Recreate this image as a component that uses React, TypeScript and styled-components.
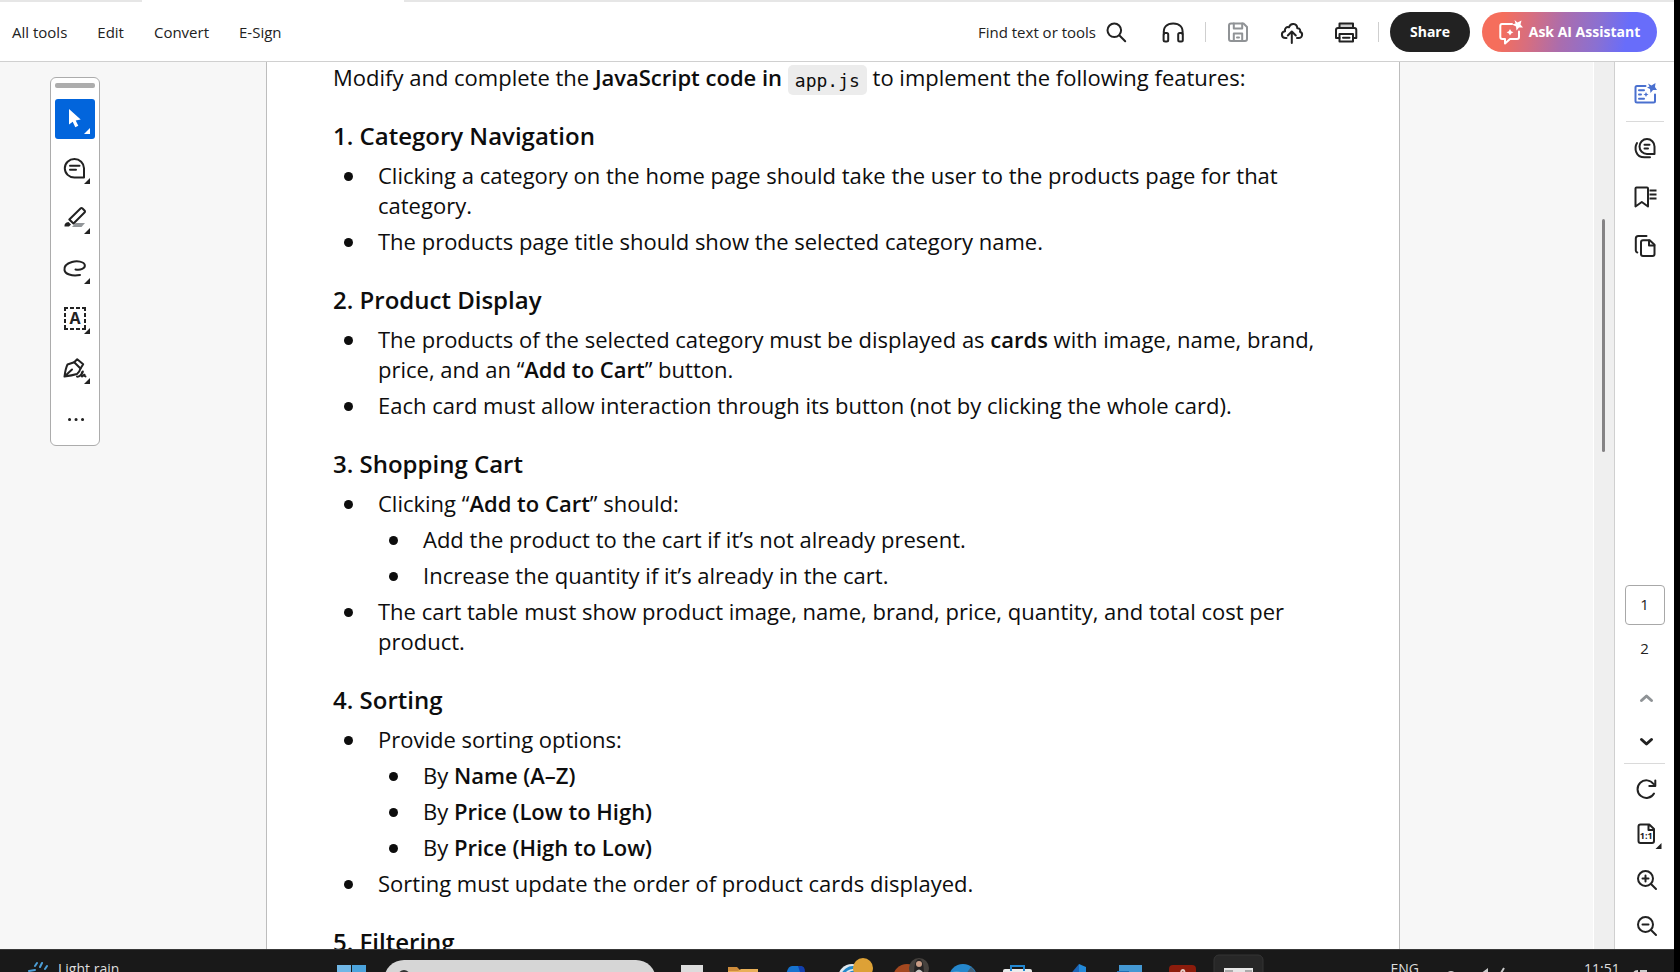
import React from 'react';
import styled, { createGlobalStyle } from 'styled-components';

const INK = '#222222';
const LINE = '#d0d0d0';
const UI_FONT = "'Open Sans', 'Noto Sans', sans-serif";

const GlobalStyle = createGlobalStyle`
  *, *::before, *::after { box-sizing: border-box; }
  body { margin: 0; background: #000; font-family: ${UI_FONT}; color: ${INK}; }
  button, input { font: inherit; color: inherit; margin: 0; }
  svg { display: block; flex: none; overflow: visible; }
`;

/* ---------- window ---------- */

const Window = styled.div`
  display: flex;
  flex-direction: column;
  height: 100vh;
  overflow: hidden;
  border-right: 6px solid #000;
  background: #fff;
`;

const TabStrip = styled.div`
  display: grid;
  grid-template-columns: 142px 262px 1fr;
  flex: none;
  height: 2px;
`;

const TabEdge = styled.span<{ $active?: boolean }>`
  background: ${(p) => (p.$active ? '#fff' : '#e6e6e6')};
`;

/* ---------- top bar ---------- */

const TopBar = styled.header`
  display: flex;
  flex: none;
  align-items: center;
  justify-content: space-between;
  height: 60px;
  padding: 0 17px 0 12px;
  border-bottom: 1px solid ${LINE};
  font-size: 15px;
  line-height: 20px;
`;

const Menu = styled.nav`
  display: flex;
  gap: 30px;
`;

const PlainButton = styled.button`
  display: flex;
  align-items: center;
  padding: 0;
  border: 0;
  background: none;
  white-space: nowrap;
  cursor: pointer;
`;

const Actions = styled.div`
  display: flex;
  align-items: center;
`;

const FindButton = styled(PlainButton)`
  gap: 8px;
  margin-right: 33px;
`;

const ActionGroup = styled.div`
  display: flex;
  gap: 30px;
`;

const Divider = styled.span`
  width: 1px;
  height: 20px;
  margin: 0 20px;
  background: #cfcfcf;
`;

const Pills = styled.div`
  display: flex;
  gap: 12px;
  margin-left: -9px;
`;

const Pill = styled.button<{ $ai?: boolean }>`
  display: flex;
  align-items: center;
  justify-content: center;
  gap: 6px;
  height: 40px;
  min-width: ${(p) => (p.$ai ? 175 : 80)}px;
  padding: 0;
  border: 0;
  border-radius: 20px;
  background: ${(p) =>
    p.$ai
      ? 'linear-gradient(100deg, #f56e5c 12%, #d66e80 28%, #aa6dae 46%, #8a70d2 66%, #686dfa 82%)'
      : INK};
  color: #fff;
  font-size: 14px;
  font-weight: 700;
  white-space: nowrap;
  cursor: pointer;
`;

/* ---------- workspace ---------- */

const Workspace = styled.main`
  display: flex;
  flex: 1;
  min-height: 0;
`;

const Viewer = styled.div`
  display: grid;
  grid-template-columns: 266px minmax(0, 1fr) 193px;
  flex: 1;
  min-width: 0;
  overflow: hidden;
  background: #f7f7f7;
`;

const Gutter = styled.div`
  min-width: 0;
`;

const Palette = styled.div`
  display: flex;
  flex-direction: column;
  align-items: center;
  gap: 10px;
  width: 50px;
  margin: 15px 0 0 50px;
  padding: 5px 0 6px;
  border: 1px solid #acacac;
  border-radius: 6px;
  background: #fff;
`;

const Grip = styled.span`
  width: 40px;
  height: 5px;
  margin-bottom: 1px;
  border-radius: 2px;
  background: #adadad;
`;

const ToolButton = styled.button<{ $selected?: boolean }>`
  width: 40px;
  height: 40px;
  padding: 0;
  border: 0;
  border-radius: 3px;
  background: ${(p) => (p.$selected ? '#0265dc' : 'none')};
  color: ${(p) => (p.$selected ? '#fff' : INK)};
  cursor: pointer;
`;

/* ---------- document ---------- */

const Page = styled.article`
  overflow: hidden;
  padding: 0 70px 0 66px;
  border: solid #bdbdbd;
  border-width: 0 1px;
  background: #fff;
  color: #0d0d0d;
  font-size: 22px;
  line-height: 30px;

  p { margin: 0; }
  strong { font-weight: 600; }
`;

const Code = styled.code`
  padding: 5px 7px 4px;
  border-radius: 5px;
  background: #ececec;
  font: 18px/18px 'DejaVu Sans Mono', monospace;
  vertical-align: -1px;
`;

const Heading = styled.h2`
  margin: 27px 0 7px;
  font-size: 24px;
  font-weight: 600;
  line-height: 34px;
`;

const List = styled.ul`
  display: flex;
  flex-direction: column;
  gap: 6px;
  margin: 0;
  padding: 0;
  list-style: none;

  & & { margin-top: 6px; }
`;

const ItemRow = styled.li`
  display: grid;
  grid-template-columns: 9px minmax(0, 1fr);
  gap: 25px;
  padding-left: 11px;

  &::before {
    content: '';
    width: 9px;
    height: 9px;
    margin-top: 12px;
    border-radius: 50%;
    background: #0d0d0d;
  }
`;

const Item = ({ children }: { children: React.ReactNode }) => (
  <ItemRow>
    <div>{children}</div>
  </ItemRow>
);

/* ---------- scrollbar and right rail ---------- */

const ScrollTrack = styled.div`
  flex: none;
  width: 22px;
  padding: 157px 0 0 9px;
  border: solid ${LINE};
  border-width: 0 1px 0 0;
  background: #efefef;
  box-shadow: inset 1px 0 #fff;
`;

const ScrollThumb = styled.div`
  width: 3px;
  height: 233px;
  border-radius: 2px;
  background: #858385;
`;

const Rail = styled.aside`
  display: flex;
  flex: none;
  flex-direction: column;
  justify-content: space-between;
  width: 59px;
  padding: 20px 0 11px;
`;

const RailGroup = styled.div<{ $gap: number }>`
  display: flex;
  flex-direction: column;
  align-items: center;
  gap: ${(p) => p.$gap}px;
`;

const RailRule = styled.hr<{ $wide?: boolean }>`
  width: ${(p) => (p.$wide ? 41 : 38)}px;
  height: 1px;
  margin: ${(p) => (p.$wide ? '9px auto 12px' : '15px auto 14px')};
  border: 0;
  background: #dadada;
`;

const PageInput = styled.input`
  width: 40px;
  height: 40px;
  padding: 0 0 3px;
  border: 1px solid #a8a8a8;
  border-radius: 4px;
  background: #fff;
  font-size: 15px;
  text-align: center;
`;

const PageCount = styled.span`
  margin: 11px 0 26px;
  font-size: 15px;
  line-height: 24px;
`;

/* ---------- taskbar ---------- */

const Taskbar = styled.footer`
  display: flex;
  flex: none;
  justify-content: space-between;
  height: 23px;
  overflow: hidden;
  border-top: 1px solid #383838;
  background: #191919;
  color: #dedede;
  font-size: 14px;
  line-height: 20px;
`;

const Weather = styled.button`
  display: flex;
  align-items: flex-start;
  gap: 10px;
  width: 337px;
  padding: 9px 0 0 28px;
  border: 0;
  background: none;
  text-align: left;
`;

const Apps = styled.div`
  display: flex;
  flex: 1;
`;

const AppButton = styled.button<{ $width?: number }>`
  flex: none;
  width: ${(p) => p.$width ?? 55}px;
  height: 23px;
  padding: 0;
  border: 0;
  background: none;
`;

const SearchBox = styled.div`
  width: 272px;
  height: 40px;
  margin: 10px 7px 0 14px;
  padding: 10px 14px;
  border-radius: 20px;
  background: #d6d6d6;
  color: #333;
`;

const Tray = styled.div`
  display: flex;
  align-items: flex-start;
  padding: 9px 26px 0 0;
`;

const TrayStatus = styled.div`
  width: 110px;
  margin: 0 27px 0 28px;
`;

const Clock = styled.time`
  width: 56px;
`;

/* ---------- icons ---------- */

type IconProps = { children: React.ReactNode; color?: string; weight?: number; size?: number };

const Icon = ({ children, color = 'currentColor', weight = 2, size = 24 }: IconProps) => (
  <svg
    width={size}
    height={size}
    viewBox={`0 0 ${size} ${size}`}
    fill="none"
    stroke={color}
    strokeWidth={weight}
    strokeLinecap="round"
    strokeLinejoin="round"
    aria-hidden="true"
  >
    {children}
  </svg>
);

const Corner = () => <path d="M35 29v6h-6z" fill="currentColor" stroke="none" />;

const tools = [
  {
    name: 'Select',
    art: <path d="M14 10v15.4l3.7-2.6 2.6 5.4 3-1.4-2.6-5.4 5-.9z" fill="currentColor" stroke="none" />,
  },
  {
    name: 'Add comment',
    art: <path d="M29 28.600h-9.600a9.600 9.300 0 1 1 9.600-9.300zM15 16.800h9.500M15 20.700h6" />,
  },
  {
    name: 'Highlight',
    art: (
      <>
        <path d="M17 28l3.500-4H30l-3.500 4z" fill="#929699" stroke="none" />
        <path d="M14.300 20.500 25.500 9.500q1-1 2 0l2 2q1 1 0 2L18.500 24.500z" />
        <path d="M9.500 27.500q-.5-4 4-4.500l2.500 2.500-2 2z" fill="currentColor" stroke="none" />
      </>
    ),
  },
  {
    name: 'Draw',
    art: <path d="M20.500 20.500c5 1 10-1 9.300-4.500C29 12.500 22 11.500 17 13c-5 1.500-8 4.500-7.500 8 .6 4 7 6.500 15.500 5" />,
  },
  {
    name: 'Add text',
    art: (
      <>
        <path
          d="M9 9h22M9 30h22M10 8v23M30 8v23"
          strokeDasharray="4 2"
          strokeLinecap="butt"
        />
        <text x="20" y="25" fontSize="16" fontWeight="700" textAnchor="middle" fill="currentColor" stroke="none">A</text>
      </>
    ),
  },
  {
    name: 'Sign',
    art: (
      <>
        <path d="M9.500 27.500q1-8 3-12l6.700-2.300 6.300 6.300q-1 3.500-3.500 5.500-5 1.500-12.500 2.500zl7.500-7" />
        <path d="m19.200 13.200 3-3 6 5-2.700 4.300M22 27.600c3 .8 6.500-4.800 5.800-5.200-1.500.5-1.800 4.800-.6 5 1 0 1.500-2 2.300-1.700.2.600-.2 1.700 1 1.700" />
      </>
    ),
  },
];

const DocumentBody = () => (
  <Page>
    <p>
      Modify and complete the <strong>JavaScript code in</strong> <Code>app.js</Code> to implement the following features:
    </p>

    <Heading>1. Category Navigation</Heading>
    <List>
      <Item>Clicking a category on the home page should take the user to the products page for that category.</Item>
      <Item>The products page title should show the selected category name.</Item>
    </List>

    <Heading>2. Product Display</Heading>
    <List>
      <Item>
        The products of the selected category must be displayed as <strong>cards</strong> with image, name, brand,
        price, and an “<strong>Add to Cart</strong>” button.
      </Item>
      <Item>Each card must allow interaction through its button (not by clicking the whole card).</Item>
    </List>

    <Heading>3. Shopping Cart</Heading>
    <List>
      <Item>
        Clicking “<strong>Add to Cart</strong>” should:
        <List>
          <Item>Add the product to the cart if it’s not already present.</Item>
          <Item>Increase the quantity if it’s already in the cart.</Item>
        </List>
      </Item>
      <Item>The cart table must show product image, name, brand, price, quantity, and total cost per product.</Item>
    </List>

    <Heading>4. Sorting</Heading>
    <List>
      <Item>
        Provide sorting options:
        <List>
          <Item>By <strong>Name (A–Z)</strong></Item>
          <Item>By <strong>Price (Low to High)</strong></Item>
          <Item>By <strong>Price (High to Low)</strong></Item>
        </List>
      </Item>
      <Item>Sorting must update the order of product cards displayed.</Item>
    </List>

    <Heading>5. Filtering</Heading>
  </Page>
);

const apps: { name: string; art: React.ReactNode }[] = [
  { name: 'Task view', art: <path d="M18 15h22v12H18z" fill="#dcdcdc" /> },
  {
    name: 'File Explorer',
    art: (
      <>
        <path d="M10 27V17h9l3 3h15v7z" fill="#cf8c3b" />
        <path d="M10 27v-6h10l3-2h17v8z" fill="#eab058" />
      </>
    ),
  },
  {
    name: 'Copilot',
    art: (
      <>
        <path d="M13 27q1-11 6-11h8q4 0 4 6v5z" fill="#1673cf" />
        <path d="M25 16h3q4 0 4 6h-5z" fill="#123fae" />
      </>
    ),
  },
  {
    name: 'Browser',
    art: (
      <>
        <circle cx="24" cy="28" r="14" fill="#dfe9f0" />
        <path d="M14 28a11 11 0 0 1 14-10M19 28a7 7 0 0 1 8-6" fill="none" stroke="#2388c9" strokeWidth="3" />
        <circle cx="35" cy="18" r="10" fill="#dda136" />
      </>
    ),
  },
  {
    name: 'PowerPoint',
    art: (
      <>
        <circle cx="24" cy="28" r="14" fill="#a4481f" />
        <circle cx="36" cy="18" r="10" fill="#46423e" />
        <path d="M31 24q0-15 5-15t5 15z" fill="#252323" />
        <circle cx="36" cy="14" r="3" fill="#c99d86" />
        <path d="M31 24q5-9 10 0z" fill="#c9c5c2" />
      </>
    ),
  },
  {
    name: 'Edge',
    art: (
      <>
        <circle cx="25" cy="28" r="14" fill="#2587cc" />
        <path d="M25 28l8-11q5 4 6 11z" fill="#416078" />
        <path d="M12 24q6-6 14 0v4H12z" fill="#459bd0" />
      </>
    ),
  },
  {
    name: 'Store',
    art: (
      <>
        <path d="M10 27v-6q0-2 2-2h25q2 0 2 2v6z" fill="#ececec" />
        <path d="M18 21v-5h13v5" fill="none" stroke="#2387d0" strokeWidth="2" />
      </>
    ),
  },
  {
    name: 'Visual Studio Code',
    art: (
      <>
        <path d="M20 27 31 14v13z" fill="#1c64b5" />
        <path d="m31 14 7 3v10h-7z" fill="#2389d8" />
        <path d="m10 22 6 5h-4z" fill="#173f77" />
      </>
    ),
  },
  {
    name: 'Remote Desktop',
    art: (
      <>
        <path d="M16 15h23v12H16z" fill="#4498d3" />
        <path d="M14 21h12v6H14z" fill="#1e6fb3" />
      </>
    ),
  },
  {
    name: 'Acrobat',
    art: (
      <>
        <rect x="11" y="15" width="27" height="20" rx="4" fill="#8c1c0c" />
        <path d="M23 24q0-4 2-4t1 4" fill="none" stroke="#e5cfc8" strokeWidth="2" />
      </>
    ),
  },
  {
    name: 'Screen recorder',
    art: (
      <>
        <rect x="1" y="5" width="49" height="30" rx="5" fill="#272727" stroke="#353535" />
        <path d="M11 18h29v9H11z" fill="#e6e6e6" />
        <path d="M12 21h8M32 21h7" stroke="#aaa" strokeWidth="2" />
      </>
    ),
  },
];

export default function App() {
  return (
    <Window>
      <GlobalStyle />
      <TabStrip>
        <TabEdge />
        <TabEdge $active />
        <TabEdge />
      </TabStrip>

      <TopBar>
        <Menu aria-label="Main">
          <PlainButton>All tools</PlainButton>
          <PlainButton>Edit</PlainButton>
          <PlainButton>Convert</PlainButton>
          <PlainButton>E-Sign</PlainButton>
        </Menu>
        <Actions>
          <FindButton>
            Find text or tools
            <Icon>
              <circle cx="10.300" cy="10.300" r="6.800" />
              <path d="m15.500 15.500 5.700 5.700" />
            </Icon>
          </FindButton>
          <PlainButton aria-label="Read aloud">
            <Icon>
              <path d="M3 14C1.800 7 6 3.500 12.200 3.500S22.600 7 21.400 14" />
              <rect x="2.600" y="13" width="4.600" height="8.500" rx="1.500" />
              <rect x="17.200" y="13" width="4.600" height="8.500" rx="1.500" />
            </Icon>
          </PlainButton>
          <Divider />
          <ActionGroup>
            <PlainButton aria-label="Save">
              <Icon color="#909396">
                <path d="M5 3.500h12.500L21 7v12q0 2-2 2H5q-2 0-2-2V5.500q0-2 2-2z" />
                <path d="M7.800 3.500v5h8.400v-5M7.800 21v-7.500h8.400V21M11 17.500h2" />
              </Icon>
            </PlainButton>
            <PlainButton aria-label="Upload to cloud">
              <Icon>
                <path d="M6.500 18H5.500C1 18 .6 11.800 5 11.300 4.300 8 7 6.300 9 7.300 10.500 2.500 17 3 17.300 8.300c3-.3 3.200 2.500 2.700 3.500 3.500 1.200 2.300 6.200-1.200 6.200H17M11.800 23V11.800M7.800 15.500l4-4 4 4" />
              </Icon>
            </PlainButton>
            <PlainButton aria-label="Print">
              <Icon>
                <path d="M5.500 8V3.500h13.500V8" fill="#d0d0d0" />
                <path d="M5.500 18H2V10q0-2 2-2h16.300q2 0 2 2v8H19" />
                <path d="M5.500 14H19v7.500H5.500zM9 17.700h6.500" />
              </Icon>
            </PlainButton>
          </ActionGroup>
          <Divider />
          <Pills>
            <Pill>Share</Pill>
            <Pill $ai>
              <Icon>
                <path d="M13 4H3Q1.300 4 1.300 6v11q0 2 2 2H6v4.500l5-4.500h7q2 0 2-2v-5.500" />
                <path d="M15.500 0 18.500 2.500 22.500.5 21.500 4.500 24 7.500 20 7.500 17.500 10.500 17 6.500 13 4.500 16.500 3.500z" fill="currentColor" stroke="none" />
                <path d="m11 9 1.200 2.200 2.200 1.100-2.200 1.100-1.200 2.200-1.200-2.200-2.200-1.100 2.200-1.100z" fill="currentColor" stroke="none" />
              </Icon>
              Ask AI Assistant
            </Pill>
          </Pills>
        </Actions>
      </TopBar>

      <Workspace>
        <Viewer>
          <Gutter>
            <Palette role="toolbar" aria-label="Tools">
              <Grip />
              {tools.map((tool, index) => (
                <ToolButton key={tool.name} aria-label={tool.name} $selected={index === 0}>
                  <Icon size={40}>
                    {tool.art}
                    <Corner />
                  </Icon>
                </ToolButton>
              ))}
              <ToolButton aria-label="More tools">
                <Icon size={40}>
                  <path d="M14.500 20.500h.1M21 20.500h.1M27.500 20.500h.1" strokeWidth="3" />
                </Icon>
              </ToolButton>
            </Palette>
          </Gutter>
          <DocumentBody />
          <Gutter />
        </Viewer>

        <ScrollTrack>
          <ScrollThumb />
        </ScrollTrack>

        <Rail>
          <RailGroup $gap={0}>
            <PlainButton aria-label="AI summary">
              <Icon color="#4a70cf">
                <path d="M12.500 4H4Q2.500 4 2.500 5.500v13.500q0 1.500 1.500 1.500h16.500q1.500 0 1.500-1.500v-6.500M6 8.300h5M6 12.500h2M6 16.700h5" />
                <path d="M15 1.500 18.500 3.500 22.500 1 22 5 24 8 20 8 17.500 11 17 7 14 5.500 16.500 4.500z" fill="#4a70cf" stroke="none" />
                <path d="m13 10 .8 1.700 1.700.8-1.700.8-.8 1.700-.8-1.700-1.700-.8 1.700-.8z" fill="#4a70cf" stroke="none" />
              </Icon>
            </PlainButton>
            <RailRule />
            <RailGroup $gap={25}>
              <PlainButton aria-label="Comments">
                <Icon>
                  <path d="M21.500 18H14A7.500 7.500 0 1 1 21.500 10.500zM11.500 8.700h5M11.500 12.500h3.500" />
                  <path d="M4 7C1 12 2.500 21.300 11.500 21.300h5.500" />
                </Icon>
              </PlainButton>
              <PlainButton aria-label="Bookmarks">
                <Icon>
                  <path d="M2.500 3.500q0-1 1-1H14q1 0 1 1v18L8.800 17l-6.300 4.500z" />
                  <path d="M17.500 5.500h5M17.500 9.500h5M17.500 13.500h5" strokeLinecap="square" />
                </Icon>
              </PlainButton>
              <PlainButton aria-label="Page thumbnails">
                <Icon>
                  <path d="M10 6.300h6.700l4.800 4.500V20q0 2-2 2H10q-2 0-2-2V8.300q0-2 2-2z" />
                  <path d="M16 6.500V11.500h5.300M4.300 18.500Q2.800 18 2.800 16.500V4.500q0-2.500 2.500-2.500h8.200" />
                </Icon>
              </PlainButton>
            </RailGroup>
          </RailGroup>

          <RailGroup $gap={0}>
            <PageInput aria-label="Page number" defaultValue="1" />
            <PageCount>2</PageCount>
            <RailGroup $gap={20}>
              <PlainButton aria-label="Previous page">
                <Icon color="#8f9396" weight={3}>
                  <path d="m8.500 14.500 5-4.500 5 4.500" />
                </Icon>
              </PlainButton>
              <PlainButton aria-label="Next page">
                <Icon weight={3}>
                  <path d="m8.500 9.500 5 4.500 5-4.500" />
                </Icon>
              </PlainButton>
            </RailGroup>
            <RailRule $wide />
            <RailGroup $gap={22}>
              <PlainButton aria-label="Rotate">
                <Icon>
                  <path d="M21 17.500A8.800 8.800 0 1 1 20.500 8M22.300 4.500V10h-6" />
                </Icon>
              </PlainButton>
              <PlainButton aria-label="Actual size">
                <Icon>
                  <path d="M7.500 2.500h8.800l4.700 4.500v12q0 2-2 2H7.500q-2 0-2-2v-14.500q0-2 2-2zM15.500 2.800V8H21" />
                  <text x="13.300" y="17" fontSize="9" fontWeight="700" textAnchor="middle" fill="currentColor" stroke="none">1:1</text>
                  <path d="M28.500 21v6h-6z" fill="currentColor" stroke="none" />
                </Icon>
              </PlainButton>
              <PlainButton aria-label="Zoom in">
                <Icon>
                  <circle cx="12.500" cy="10.500" r="7.500" />
                  <path d="m18 16 5 5M9.500 10.500h6M12.500 7.500v6" />
                </Icon>
              </PlainButton>
              <PlainButton aria-label="Zoom out">
                <Icon>
                  <circle cx="12.500" cy="10.500" r="7.500" />
                  <path d="m18 16 5 5M9.500 10.500h6" />
                </Icon>
              </PlainButton>
            </RailGroup>
          </RailGroup>
        </Rail>
      </Workspace>

      <Taskbar>
        <Weather>
          <Icon size={20} color="#4c9fd8">
            <path d="m7 7 2-3M12 8l2-4M17 10l2-3M1 12l6-1" />
          </Icon>
          Light rain
        </Weather>
        <Apps>
          <AppButton $width={33} aria-label="Start">
            <svg width="33" height="23" viewBox="0 0 33 23">
              <path d="M0 15h14v12H0z" fill="#70b7e6" />
              <path d="M15 15h14v12H15z" fill="#4ba3dc" />
            </svg>
          </AppButton>
          <SearchBox>
            <Icon size={12}>
              <circle cx="6" cy="6" r="5" />
            </Icon>
          </SearchBox>
          {apps.map((app) => (
            <AppButton key={app.name} aria-label={app.name}>
              <svg width="55" height="23" viewBox="0 0 55 23">{app.art}</svg>
            </AppButton>
          ))}
        </Apps>
        <Tray>
          <span>ENG</span>
          <TrayStatus>
            <svg width="60" height="20" viewBox="0 0 60 20" fill="none" stroke="#c9c9c9" strokeWidth="2">
              <path d="M0 15q4-4 8 0M36 14l4-3v6M54 14l3-5" />
            </svg>
          </TrayStatus>
          <Clock>11:51</Clock>
          <svg width="8" height="20" viewBox="0 0 8 20" fill="none" stroke="#c9c9c9" strokeWidth="2">
            <path d="M-6 15q0-3 4-3M0 12h6v5" />
          </svg>
        </Tray>
      </Taskbar>
    </Window>
  );
}
